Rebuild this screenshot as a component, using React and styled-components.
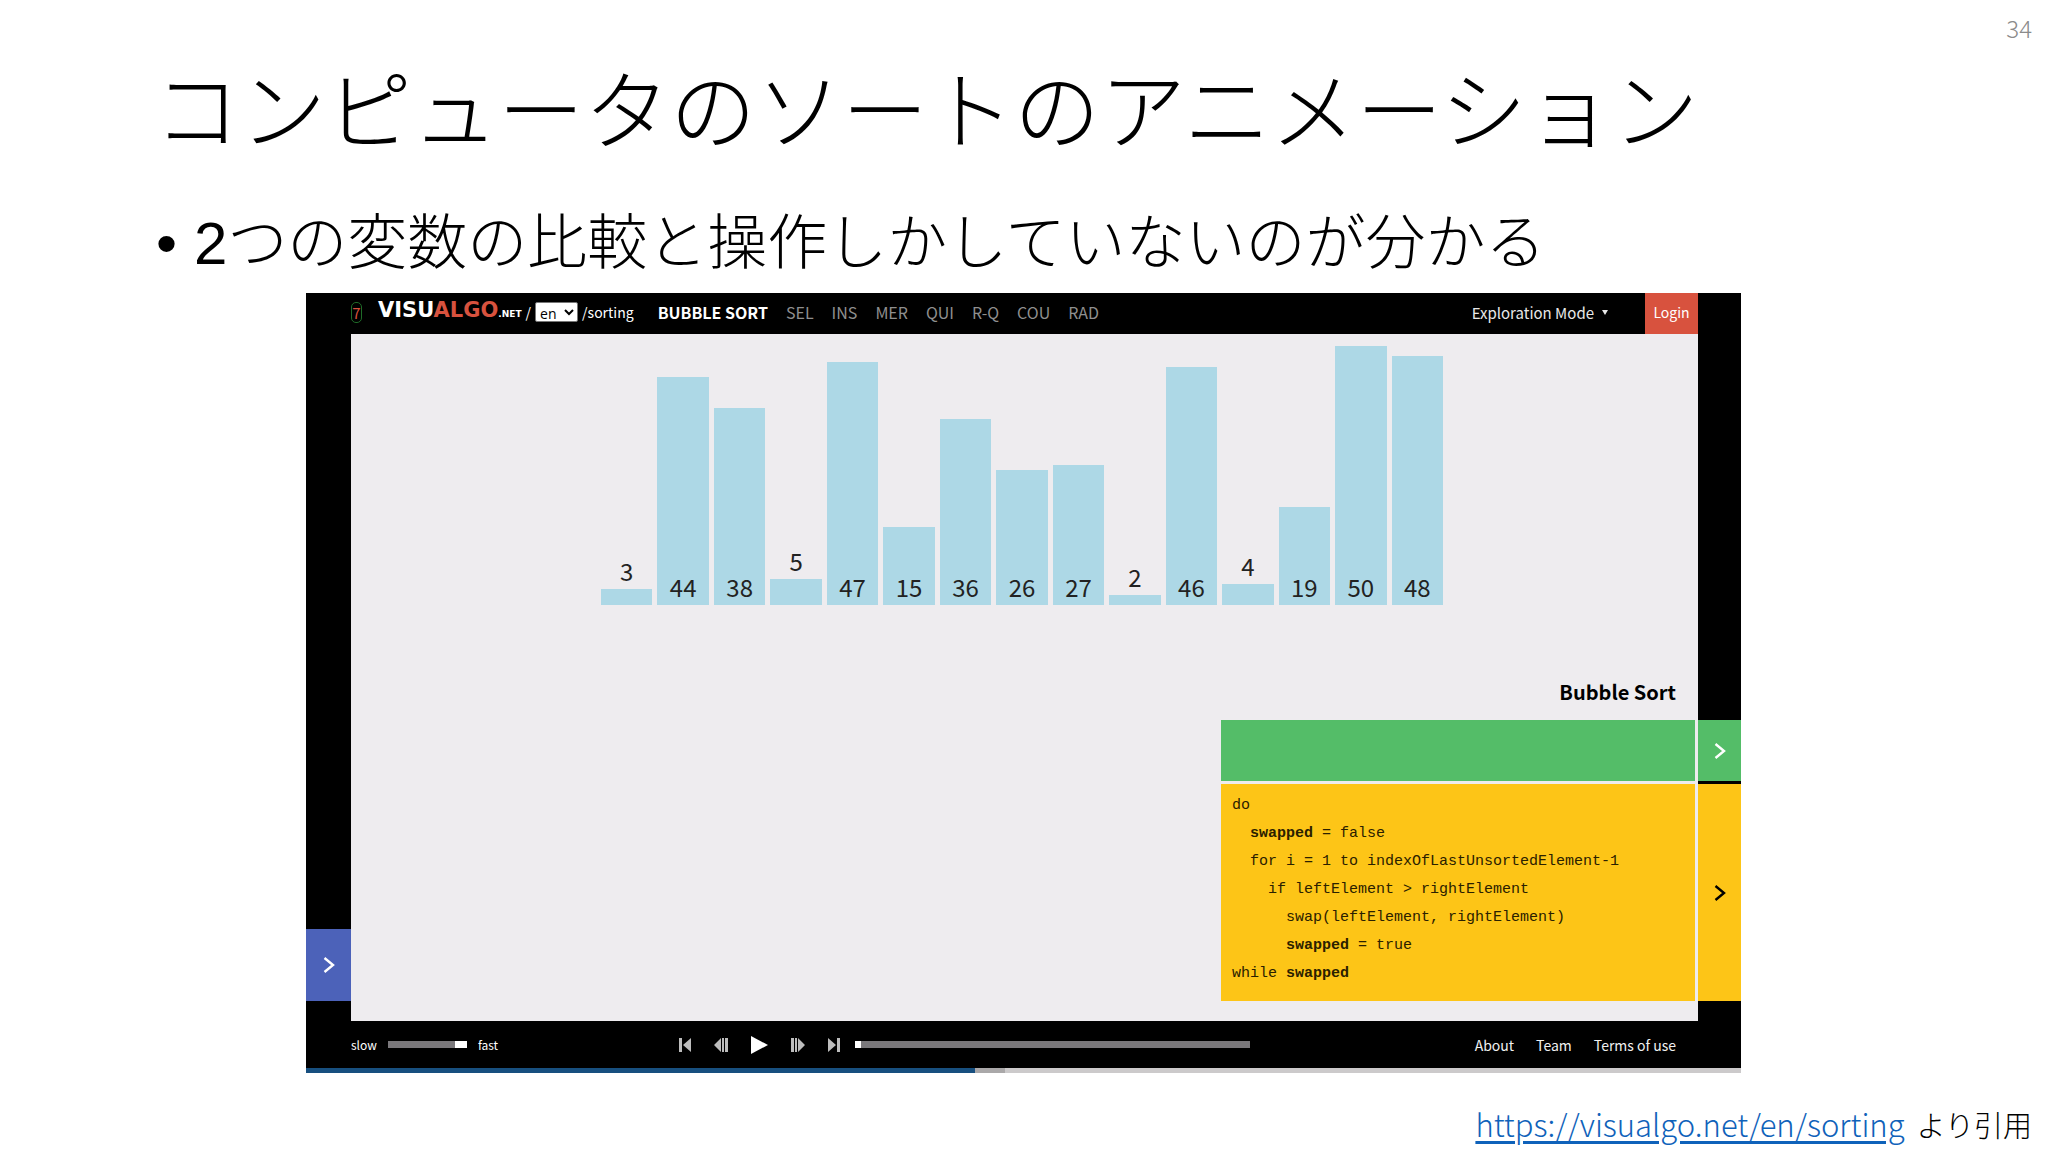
import { useState } from "react";
import styled, { createGlobalStyle } from "styled-components";


const values = [3, 44, 38, 5, 47, 15, 36, 26, 27, 2, 46, 4, 19, 50, 48];

const algorithms = ['SEL', 'INS', 'MER', 'QUI', 'R-Q', 'COU', 'RAD'];

const Chevron = () => (
    <svg width="12" height="16" viewBox="0 0 12 16" fill="none" stroke="currentColor" strokeWidth="2.4">
        <path d="M1.5 1 10 8 1.5 15" />
    </svg>
);

const icons = [
    { label: 'Go to beginning', width: 12, height: 14, path: 'M0 0h3v14H0zM12 0v14L4 7z' },
    { label: 'Previous frame', width: 14, height: 14, path: 'M7 0v14L0 7zM8 0h2v14H8zM11 0h3v14h-3z' },
    { label: 'Play', width: 17, height: 18, path: 'M0 0 17 9 0 18z' },
    { label: 'Next frame', width: 14, height: 14, path: 'M0 0h3v14H0zM4 0h2v14H4zM7 0v14L14 7z' },
    { label: 'Go to end', width: 12, height: 14, path: 'M9 0h3v14H9zM0 0v14L8 7z' },
];

const Chart = () => (
    <Bars>
        {values.map((value, i) => (
            <Column key={i}>
                {value < 10 && <BarText>{value}</BarText>}
                <Bar style={{ height: Math.round(value * 5.18) }}>
                    {value >= 10 && <BarText>{value}</BarText>}
                </Bar>
            </Column>
        ))}
    </Bars>
);

const App = () => {
    const [speed, setSpeed] = useState(100);
    const [frame, setFrame] = useState(0);

    return (
        <Slide>
            <GlobalStyle />
            <PageNumber>34</PageNumber>
            <Title>コンピュータのソートのアニメーション</Title>
            <Points>
                <Point><Latin>2</Latin>つの変数の比較と操作しかしていないのが分かる</Point>
            </Points>

            <Player>
                <Header>
                    <Badge>7</Badge>
                    <Logo href="#home">VISU<Red>ALGO</Red><Net>.NET</Net></Logo>
                    <PathText>/</PathText>
                    <Language aria-label="Language" defaultValue="en">
                        <option>en</option>
                    </Language>
                    <PathText>/sorting</PathText>
                    <Nav>
                        <NavLink href="#bubble" $active>BUBBLE SORT</NavLink>
                        {algorithms.map((name) => (
                            <NavLink key={name} href={`#${name}`}>{name}</NavLink>
                        ))}
                    </Nav>
                    <ModeButton>Exploration Mode <Caret viewBox="0 0 6 5"><path d="M0 0h6L3 5z" /></Caret></ModeButton>
                    <Login>Login</Login>
                </Header>

                <Body>
                    <LeftRail>
                        <Tab $color="#4c62b9" $height={72} aria-label="Actions"><Chevron /></Tab>
                    </LeftRail>
                    <Stage>
                        <Chart />
                        <Side>
                            <SortName>Bubble Sort</SortName>
                            <Status />
                            <Code>
                                <Line>do</Line>
                                <Line $indent={1}><b>swapped</b> = false</Line>
                                <Line $indent={1}>for i = 1 to indexOfLastUnsortedElement-1</Line>
                                <Line $indent={2}>if leftElement &gt; rightElement</Line>
                                <Line $indent={3}>swap(leftElement, rightElement)</Line>
                                <Line $indent={3}><b>swapped</b> = true</Line>
                                <Line>while <b>swapped</b></Line>
                            </Code>
                        </Side>
                    </Stage>
                    <RightRail>
                        <Tab $color="#54bd68" $height={61} aria-label="Status"><Chevron /></Tab>
                        <Tab $color="#fdc517" $height={217} $dark aria-label="Code"><Chevron /></Tab>
                    </RightRail>
                </Body>

                <Footer>
                    <Speed>
                        slow
                        <Slider
                            type="range" aria-label="Speed" $width={79} $thumb={12}
                            value={speed} onChange={(e) => setSpeed(e.target.value)}
                        />
                        fast
                    </Speed>
                    <Controls>
                        {icons.map((icon) => (
                            <IconButton key={icon.label} aria-label={icon.label} $main={icon.label === 'Play'}>
                                <svg width={icon.width} height={icon.height} fill="currentColor">
                                    <path d={icon.path} />
                                </svg>
                            </IconButton>
                        ))}
                    </Controls>
                    <Slider
                        type="range" aria-label="Progress" $width={395} $thumb={6}
                        value={frame} onChange={(e) => setFrame(e.target.value)}
                    />
                    <FooterLinks>
                        <a href="#about">About</a>
                        <a href="#team">Team</a>
                        <a href="#terms">Terms of use</a>
                    </FooterLinks>
                </Footer>
                <Buffer>
                    <Played />
                    <Loaded />
                </Buffer>
            </Player>

            <Source>
                <SourceLink href="https://visualgo.net/en/sorting">https://visualgo.net/en/sorting</SourceLink>
                より引用
            </Source>
        </Slide>
    );
}

export default App;


const GlobalStyle = createGlobalStyle`
    * {
        box-sizing: border-box;
    }

    body {
        margin: 0;
        background-color: white;
        color: black;
        font-family: "Noto Sans CJK JP", sans-serif;
    }

    button {
        font-family: inherit;
        border: none;
        padding: 0;
        cursor: pointer;
    }

    svg {
        display: block;
    }
`;

const Slide = styled.main`
    display: flex;
    flex-direction: column;
`;

const PageNumber = styled.div`
    padding: 13px 16px 0;
    font-size: 24px;
    font-weight: 300;
    line-height: 30px;
    text-align: right;
    color: #8b8b8b;
`;

const Title = styled.h1`
    margin: 0 0 0 154px;
    font-size: 86px;
    font-weight: 300;
    line-height: 126px;
`;

const Points = styled.ul`
    margin: 29px 0 0 156px;
    padding: 0;
    list-style: none;
`;

const Point = styled.li`
    display: flex;
    align-items: baseline;
    font-size: 60px;
    font-weight: 300;
    line-height: 80px;

    &::before {
        content: "•";
        width: 38px;
        font-family: "Liberation Sans", sans-serif;
    }
`;

const Latin = styled.span`
    font-family: "Liberation Sans", sans-serif;
    font-weight: 400;
`;

const Player = styled.section`
    margin: 9px 307px 0 306px;
    background-color: black;
    color: white;
`;

const Header = styled.header`
    display: flex;
    align-items: center;
    height: 41px;
    padding: 0 43px 3px 45px;
    font-size: 14px;
`;

const Badge = styled.span`
    width: 11px;
    height: 21px;
    border: 1px solid #1f6b28;
    border-radius: 5px;
    font-size: 15px;
    line-height: 19px;
    text-align: center;
    color: #d8523e;
`;

const Logo = styled.a`
    margin-left: 16px;
    font-family: "DejaVu Sans", sans-serif;
    font-size: 21px;
    font-weight: 700;
    line-height: 24px;
    color: white;
    text-decoration: none;
`;

const Red = styled.span`
    color: #d8523e;
`;

const Net = styled.span`
    font-size: 9px;
`;

const PathText = styled.span`
    margin: 0 4px;
`;

const Language = styled.select`
    width: 43px;
    height: 20px;
    padding: 0;
    border: 1px solid #767676;
    border-radius: 2px;
    background-color: white;
    font-family: "Open Sans", sans-serif;
    font-size: 14px;
    line-height: 18px;
`;

const Nav = styled.nav`
    display: flex;
    gap: 18px;
    margin-left: 20px;
`;

const NavLink = styled.a`
    font-size: 16px;
    line-height: 24px;
    font-weight: ${({ $active }) => $active ? 700 : 400};
    color: ${({ $active }) => $active ? 'white' : '#8f8f8f'};
    text-decoration: none;
`;

const ModeButton = styled.button`
    display: flex;
    align-items: center;
    gap: 8px;
    margin-left: auto;
    margin-right: 37px;
    background: none;
    font-size: 15px;
    color: #e8e8e8;
`;

const Caret = styled.svg`
    width: 6px;
    height: 5px;
    fill: currentColor;
`;

const Login = styled.button`
    align-self: flex-start;
    width: 53px;
    height: 41px;
    padding-bottom: 3px;
    background-color: #d8523e;
    font-size: 14px;
    color: white;
`;

const Body = styled.div`
    display: flex;
`;

const LeftRail = styled.div`
    display: flex;
    flex-direction: column;
    justify-content: flex-end;
    width: 45px;
    padding-bottom: 20px;
`;

const RightRail = styled.div`
    display: flex;
    flex-direction: column;
    justify-content: flex-end;
    gap: 3px;
    width: 43px;
    padding-bottom: 20px;
`;

const Tab = styled.button`
    display: flex;
    align-items: center;
    justify-content: center;
    height: ${({ $height }) => $height}px;
    background-color: ${({ $color }) => $color};
    color: ${({ $dark }) => $dark ? 'black' : 'white'};
`;

const Stage = styled.div`
    flex: 1;
    padding: 12px 3px 20px 0;
    background-color: #eeecef;
    color: black;
`;

const Bars = styled.div`
    display: grid;
    grid-template-columns: repeat(15, 1fr);
    align-items: end;
    gap: 5px;
    height: 259px;
    padding: 0 252px 0 250px;
`;

const Column = styled.div`
    display: flex;
    flex-direction: column;
    text-align: center;
`;

const Bar = styled.div`
    display: flex;
    align-items: flex-end;
    justify-content: center;
    background-color: #add8e6;
`;

const BarText = styled.span`
    padding-bottom: 3px;
    font-size: 24px;
    line-height: 30px;
    color: #222;
`;

const Side = styled.div`
    width: 474px;
    margin: 71px 0 0 auto;
`;

const SortName = styled.h2`
    margin: 0;
    padding: 0 19px 12px 0;
    font-size: 20px;
    font-weight: 700;
    line-height: 32px;
    text-align: right;
`;

const Status = styled.div`
    height: 61px;
    margin-bottom: 3px;
    background-color: #54bd68;
`;

const Code = styled.div`
    height: 217px;
    padding: 8px 11px;
    background-color: #fdc517;
    font-family: "Liberation Mono", monospace;
    font-size: 15px;
    line-height: 28px;
    color: #2a2000;
`;

const Line = styled.div`
    padding-left: ${({ $indent = 0 }) => $indent * 18}px;
    white-space: nowrap;
`;

const Footer = styled.footer`
    display: flex;
    align-items: center;
    height: 47px;
    padding: 0 65px 0 45px;
`;

const Speed = styled.label`
    display: flex;
    align-items: center;
    gap: 11px;
    font-size: 12px;
`;

const Slider = styled.input`
    appearance: none;
    width: ${({ $width }) => $width}px;
    height: 7px;
    margin: 0;
    background-color: #7a787b;

    &::-webkit-slider-thumb {
        appearance: none;
        width: ${({ $thumb }) => $thumb}px;
        height: 7px;
        background-color: white;
    }
`;

const Controls = styled.div`
    display: flex;
    align-items: center;
    gap: 23px;
    margin: 0 15px 0 181px;
`;

const IconButton = styled.button`
    background: none;
    color: ${({ $main }) => $main ? 'white' : '#bdbdbd'};
`;

const FooterLinks = styled.nav`
    display: flex;
    gap: 22px;
    margin-left: auto;

    a {
        font-size: 14px;
        color: #f0f0f0;
        text-decoration: none;
    }
`;

const Buffer = styled.div`
    display: flex;
    height: 5px;
    background-color: #cccacb;
`;

const Played = styled.div`
    width: 669px;
    background-color: #174f7f;
`;

const Loaded = styled.div`
    width: 30px;
    background-color: #aaa8a9;
`;

const Source = styled.p`
    display: flex;
    align-items: baseline;
    justify-content: flex-end;
    gap: 12px;
    margin: 29px 16px 0 0;
    font-size: 29px;
    font-weight: 300;
    line-height: 44px;
`;

const SourceLink = styled.a`
    font-size: 31px;
    color: #0f62ba;
    text-underline-offset: 4px;
`;
